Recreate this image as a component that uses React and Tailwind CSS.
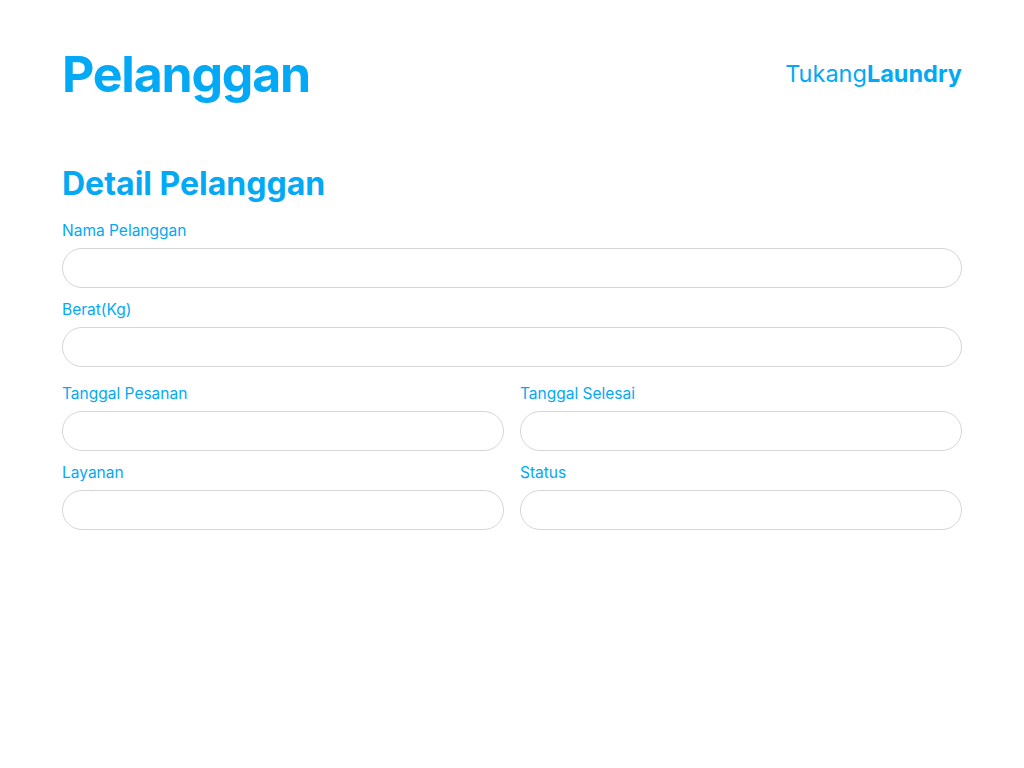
const Field = ({ label }) => (
  <div className="flex flex-col">
    <label className="text-[15.5px] leading-[20px] text-[#03a9f4] mb-[7px] pt-[1px]">{label}</label>
    <input
      type="text"
      className="h-10 w-full rounded-full border border-[#d6d6d6] bg-white px-5 text-[15px] text-gray-700 outline-none"
    />
  </div>
);

const App = () => {
  return (
    <div
      className="min-h-screen bg-white px-[62px] pt-[40px]"
      style={{ fontFamily: '"Inter", "Noto Sans", sans-serif' }}
    >
      <header className="flex items-center justify-between">
        <h1 className="text-[50px] leading-[68px] font-bold tracking-[-1.2px] text-[#03a9f4]">Pelanggan</h1>
        <div className="text-[23.5px] leading-[30px] text-[#03a9f4]">
          Tukang<span className="font-bold">Laundry</span>
        </div>
      </header>

      <h2 className="mt-[56px] text-[32px] leading-[40px] font-bold text-[#03a9f4]">Detail Pelanggan</h2>

      <form className="mt-[16px]">
        <div className="flex flex-col gap-[11px]">
          <Field label="Nama Pelanggan" />
          <Field label="Berat(Kg)" />
        </div>
        <div className="mt-[16px] grid grid-cols-2 gap-x-4 gap-y-[11px]">
          <Field label="Tanggal Pesanan" />
          <Field label="Tanggal Selesai" />
          <Field label="Layanan" />
          <Field label="Status" />
        </div>
      </form>
    </div>
  );
};

export default App;
